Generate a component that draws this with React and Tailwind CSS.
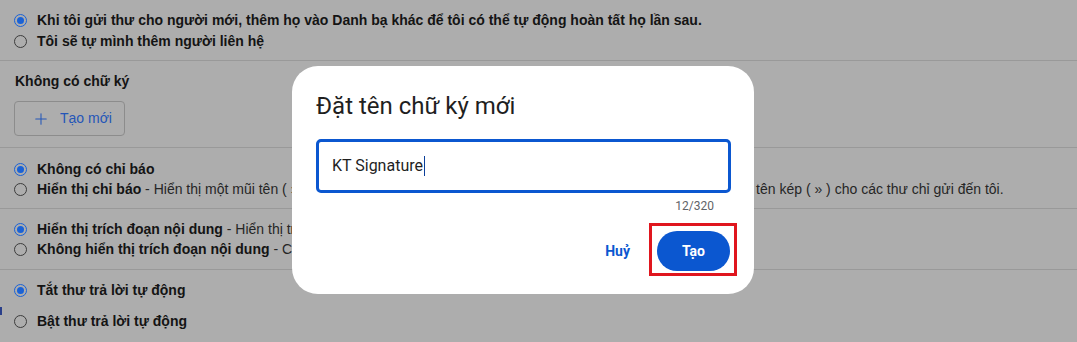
import { Plus } from 'lucide-react';

function Radio({ checked }) {
  return (
    <span
      className={`flex h-[13px] w-[13px] shrink-0 items-center justify-center rounded-full border-[1.5px] ${
        checked ? 'border-[#1a62d6]' : 'border-[#3c3c3c]'
      }`}
    >
      {checked && <span className="h-[7px] w-[7px] rounded-full bg-[#1a62d6]" />}
    </span>
  );
}

function Option({ checked, label, desc, className = '' }) {
  return (
    <div className={`flex h-[20px] items-center gap-[10px] whitespace-nowrap ${className}`}>
      <Radio checked={checked} />
      <span className="text-[14px] text-[#141414]">
        <span className="font-bold">{label}</span>
        {desc && <span className="text-[#262626]"> - {desc}</span>}
      </span>
    </div>
  );
}

export default function App() {
  return (
    <div className="relative h-[342px] w-[1077px] overflow-hidden bg-[#adadad] font-['Liberation_Sans',Arial,sans-serif]">
      {/* Contacts */}
      <div className="border-b border-[#999999] px-[14px] pb-[8px] pt-[10px]">
        <Option
          checked
          className="h-[21px]"
          label="Khi tôi gửi thư cho người mới, thêm họ vào Danh bạ khác để tôi có thể tự động hoàn tất họ lần sau."
        />
        <Option className="h-[21px]" label="Tôi sẽ tự mình thêm người liên hệ" />
      </div>

      {/* Signature */}
      <div className="border-b border-[#999999] px-[14px] pb-[11px] pt-[10px]">
        <p className="h-[20px] pl-[1px] text-[14px] font-bold leading-[20px] text-[#141414]">Không có chữ ký</p>
        <button className="mt-[10px] flex h-[35px] w-[111px] items-center gap-[10px] rounded-[4px] border border-[#8c8c8c] pl-[17px] text-[14px] text-[#2456b8]">
          <Plus size={18} strokeWidth={1.4} />
          Tạo mới
        </button>
      </div>

      {/* Indicators */}
      <div className="border-b border-[#999999] px-[14px] pb-[9px] pt-[11px]">
        <Option checked label="Không có chỉ báo" />
        <Option
          label="Hiển thị chỉ báo"
          desc="Hiển thị một mũi tên ( › ) bên cạnh các thư gửi đến địa chỉ của tôi (không phải danh sách) và mũi tên kép ( » ) cho các thư chỉ gửi đến tôi."
        />
      </div>

      {/* Snippets */}
      <div className="border-b border-[#999999] px-[14px] pb-[10px] pt-[10px]">
        <Option checked label="Hiển thị trích đoạn nội dung" desc="Hiển thị trích đoạn nội dung của thư." />
        <Option label="Không hiển thị trích đoạn nội dung" desc="Chỉ hiển thị tiêu đề." />
      </div>

      {/* Vacation responder */}
      <div className="flex flex-col gap-[11px] px-[14px] pt-[10px]">
        <Option checked label="Tắt thư trả lời tự động" />
        <Option label="Bật thư trả lời tự động" />
      </div>

      <span className="absolute left-0 top-[307px] h-[8px] w-[2px] bg-[#2a3f8a]" />

      {/* Dialog */}
      <div className="absolute left-[292px] top-[66px] w-[462px] rounded-[26px] bg-white px-[24px] pb-[23px] pt-[24px] font-['Roboto',sans-serif]">
        <h2 className="text-[24px] leading-[32px] text-[#1f1f1f]">Đặt tên chữ ký mới</h2>
        <div className="mt-[17px] flex h-[54px] w-[415px] items-center rounded-[5px] border-[3px] border-[#0b57d0] pl-[13px]">
          <span className="text-[16px] text-[#1f1f1f]">KT Signature</span>
          <span className="ml-[1px] h-[20px] w-[1px] bg-[#0b3f9a]" />
        </div>
        <p className="mr-[16px] mt-[6px] text-right text-[12px] leading-[14px] text-[#5f6368]">12/320</p>
        <div className="relative mt-[18px] flex items-center justify-end gap-[27px]">
          <button className="text-[14px] font-bold text-[#0b57d0]">Huỷ</button>
          <button className="h-[40px] w-[73px] rounded-full bg-[#0b57d0] text-[14px] font-bold text-white">Tạo</button>
          <span className="absolute right-[-7px] top-[-8px] h-[53px] w-[88px] border-[3px] border-[#e0161e]" />
        </div>
      </div>
    </div>
  );
}
